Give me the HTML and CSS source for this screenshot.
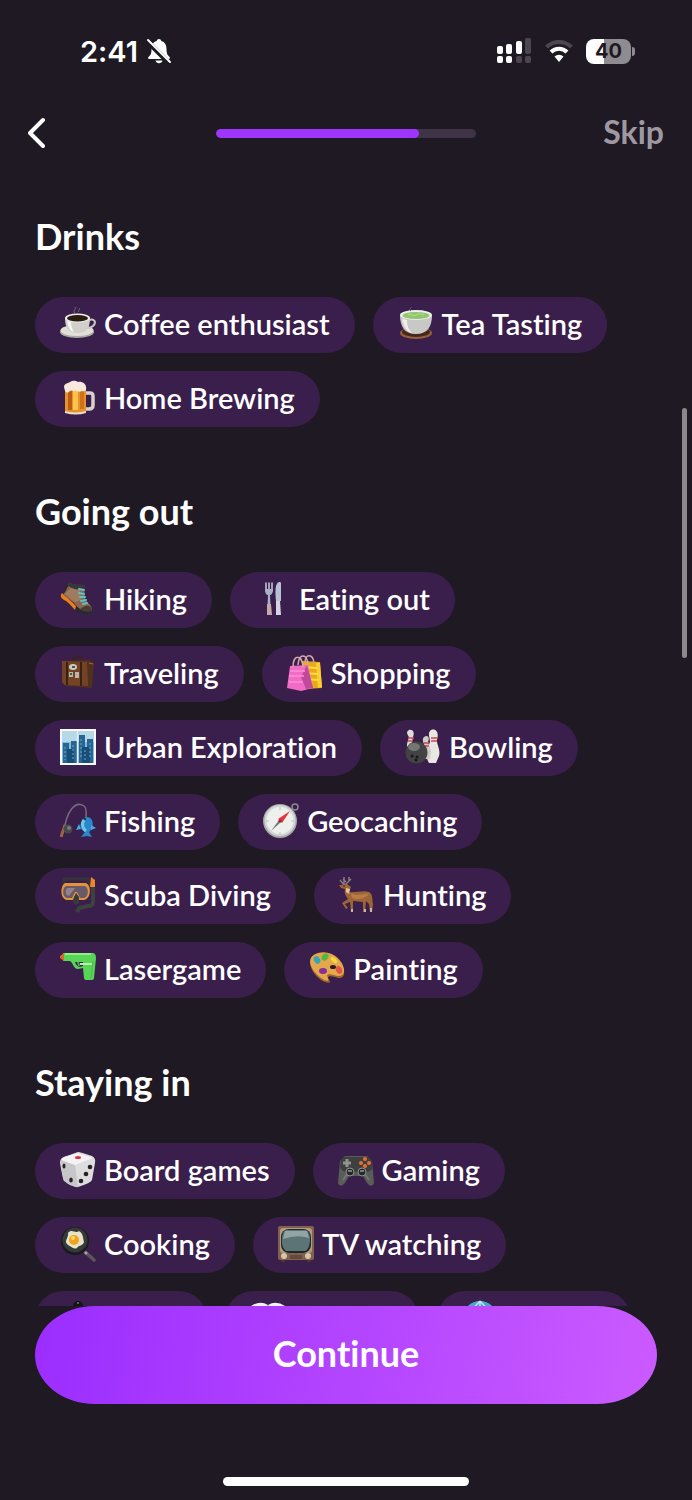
FILE: index.html
```html
<!DOCTYPE html>
<html lang="en">
<head>
    <meta charset="UTF-8">
    <meta name="viewport" content="width=device-width, initial-scale=1.0">
    <title>Interests</title>
    <link rel="stylesheet" href="styles.css">
</head>
<body>
    <div class="status-bar">
        <div class="status-left">
            <span class="time">2:41</span>
            <svg width="26" height="26" viewBox="0 0 26 26">
                <path d="M13 1c-1.400 0-2 .8-2.300 2C7 4 5.500 7 5.500 11c0 5-1 6-3 8-.9 1-.4 2 .8 2h19.400c1.200 0 1.700-1 .8-2-2-2-3-3-3-8 0-4-1.500-7-5.200-8C15 1.800 14.400 1 13 1z" fill="#fff"/>
                <path d="M9.500 22.500h7c-.5 1.800-1.800 2.800-3.500 2.800s-3-1-3.500-2.800z" fill="#fff"/>
                <path d="M1 3l22 22" stroke="#1e1922" stroke-width="5"/>
                <path d="M2 2l22 22" stroke="#fff" stroke-width="2" stroke-linecap="round"/>
            </svg>
        </div>
        <div class="status-right">
            <svg width="36" height="26" viewBox="0 0 36 26">
                <g fill="#fff">
                    <rect x="1" y="8" width="6" height="8" rx="2"/>
                    <rect x="10" y="6" width="6" height="10" rx="2"/>
                    <rect x="20" y="3" width="6" height="13" rx="2"/>
                    <rect x="1" y="18" width="6" height="7" rx="2"/>
                    <rect x="10" y="18" width="6" height="7" rx="2"/>
                </g>
                <g fill="#4b464f">
                    <rect x="29" y="0" width="6" height="16" rx="2"/>
                    <rect x="20" y="18" width="6" height="7" rx="2"/>
                    <rect x="29" y="18" width="6" height="7" rx="2"/>
                </g>
            </svg>
            <svg width="30" height="26" viewBox="0 0 30 26">
                <path d="M2.500 9a18 18 0 0 1 25 0" fill="none" stroke="#4b464f" stroke-width="4"/>
                <path d="M7 14a11.500 11.500 0 0 1 16 0" fill="none" stroke="#fff" stroke-width="4"/>
                <path d="M10.500 18.500a7 7 0 0 1 9 0L15 24z" fill="#fff"/>
            </svg>
            <div class="battery"><span>40</span></div>
        </div>
    </div>

    <header class="top-nav">
        <button class="back-btn" aria-label="Back">
            <svg width="17" height="32" viewBox="2 0 17 32">
                <path d="M17 3L4 16l13 13" fill="none" stroke="#fff" stroke-width="4" stroke-linecap="round" stroke-linejoin="round"/>
            </svg>
        </button>
        <div class="progress"><div class="progress-fill" style="width: 78%"></div></div>
        <a href="#skip" class="skip">Skip</a>
    </header>

    <main class="content">
        <section>
            <h2>Drinks</h2>
            <div class="chips">
                <button class="chip">
                    <svg class="icon" viewBox="0 0 36 36">
                        <ellipse cx="17" cy="26" rx="17" ry="6" fill="#aaa9a2"/>
                        <ellipse cx="17" cy="24.500" rx="16.500" ry="5.500" fill="#e0dfd8"/>
                        <path d="M29 14c5-2 8 2 4 6-2 2-5 2-6 2" fill="none" stroke="#c9c8c2" stroke-width="2"/>
                        <path d="M5 12c0 9 3 15 12.500 15S30 21 30 12z" fill="#d0cfc9"/>
                        <path d="M7 15c1 6 3 10 7 11-2-3-3-6-3-10z" fill="#f7f6f2"/>
                        <ellipse cx="17.500" cy="12" rx="12.500" ry="4.500" fill="#ecebe5"/>
                        <ellipse cx="17.500" cy="12.300" rx="10.500" ry="3.200" fill="#2a1c12"/>
                        <path d="M15 7c-3-3 2-3 0-6M19 6c-2-2 2-2 0-4" fill="none" stroke="#796889" stroke-width="1"/>
                    </svg>
                    Coffee enthusiast
                </button>
                <button class="chip">
                    <svg class="icon" viewBox="0 0 36 36">
                        <ellipse cx="18" cy="27" rx="16" ry="6" fill="#95613c"/>
                        <ellipse cx="18" cy="26" rx="14" ry="5" fill="#49281a"/>
                        <path d="M2 9c0 11 4 19 16 19s16-8 16-19z" fill="#c8c8c6"/>
                        <path d="M4 13c2 8 5 13 10 14-4-4-5-8-5-13z" fill="#efefed"/>
                        <ellipse cx="18" cy="9" rx="16" ry="5" fill="#eeefeb"/>
                        <ellipse cx="18" cy="9.500" rx="13.500" ry="3.500" fill="#8fc66f"/>
                        <path d="M10 9c3-2 5 2 8 0s5-1 8 0" fill="none" stroke="#b8df9a"/>
                        <path d="M13 5c-3-2 1-3 0-4" fill="none" stroke="#6d5778"/>
                    </svg>
                    Tea Tasting
                </button>
                <button class="chip">
                    <svg class="icon" viewBox="0 0 36 36">
                        <path d="M25 13h5q3 0 3 3v9q0 4-4 4h-4" fill="none" stroke="#d7d0cb" stroke-width="3.500"/>
                        <path d="M5 9h21v23q-10 3-21 0z" fill="#e8922b"/>
                        <path d="M8 11h4v19H8z" fill="#b95b16"/>
                        <path d="M13 11h5v19h-5z" fill="#ffc34b"/>
                        <path d="M20 11h4v18h-4z" fill="#cf721a"/>
                        <path d="M5 31q10 3 21 0v2q-10 3-21 0z" fill="#eee0d0"/>
                        <path d="M4 7c0-4 5-4 6-5 3-2 6-1 8 0 4-1 8 2 8 5 1 4-2 5-4 4-3 2-6-1-8 0-2 0-3-1-4 0s-3 3-5 0z" fill="#f8e8dd"/>
                    </svg>
                    Home Brewing
                </button>
            </div>
        </section>

        <section>
            <h2>Going out</h2>
            <div class="chips">
                <button class="chip">
                    <svg class="icon" viewBox="0 0 36 36">
                        <path d="M7 3L3 13c-4 4-1 6 4 9 5 4 9 12 24 11 2-1 2-3 1-5z" fill="#29282a"/>
                        <path d="M2 12c-3 4 0 6 4 8 4 3 6 6 9 9l1-4c-5-5-8-8-14-13z" fill="#ee7c20"/>
                        <path d="M9 2l15 4 1 11c1 4 7 7 7 12-9 3-14-2-18-7-3-3-7-5-11-8 2-3 5-7 6-12z" fill="#8a6750"/>
                        <path d="M12 6l8 2 1 11-6 2c-4-3-7-5-10-8z" fill="#a17b60"/>
                        <path d="M9 1c5 3 10 2 16 3l-1 5c-6 0-11-1-16-4z" fill="#38363a"/>
                        <path d="M25 25c4-1 7 1 7 5-5 2-9 0-12-2z" fill="#493b35"/>
                        <path d="M19 8l5 1M19 12l5 1M20 16l5 0M21 20l5-1M23 23l4-1" stroke="#5cc4c5" stroke-width="2" stroke-linecap="round"/>
                    </svg>
                    Hiking
                </button>
                <button class="chip">
                    <svg class="icon" viewBox="0 0 36 36">
                        <path d="M11 2v8M14 2v8M17 2v8" stroke="#c7cbdc" stroke-width="1.500" stroke-linecap="round"/>
                        <path d="M10 8h8c0 5-2 6-3 6l1 20h-4l1-20c-2 0-3-2-3-6z" fill="#aab0c6"/>
                        <path d="M12 23h4l1 11h-5z" fill="#c4aaa8"/>
                        <path d="M24 1c-4 1-4 10-3 19h5V2c0-1-1-1-2-1z" fill="#bac1d7"/>
                        <path d="M21 20h4l1 14h-5z" fill="#d4d4e2"/>
                    </svg>
                    Eating out
                </button>
                <button class="chip">
                    <svg class="icon" viewBox="0 0 36 36">
                        <path d="M13 5c0-5 9-5 9 0" fill="none" stroke="#39251d" stroke-width="2"/>
                        <path d="M2 6l27-1 5 3-2 25-27-2-3-3z" fill="#51301e"/>
                        <path d="M2 6l25 1 1 24-23-1-3-3z" fill="#744325"/>
                        <path d="M7 7v23M21 7v24" stroke="#392116" stroke-width="2"/>
                        <ellipse cx="13" cy="12" rx="4" ry="3" fill="#d2cbbc"/>
                        <path d="M9 17h4v5H9zM15 17h4v6h-4z" fill="#b9b7a6"/>
                        <path d="M12 12h3M10 19h2" stroke="#345e58" stroke-width="2"/>
                        <path d="M29 8l4 1" stroke="#a56d42"/>
                    </svg>
                    Traveling
                </button>
                <button class="chip">
                    <svg class="icon" viewBox="0 0 36 36">
                        <path d="M15 6l18 1 2 26-18 1z" fill="#e8ab17"/>
                        <path d="M29 8l4 0 2 24-4 1z" fill="#f9cf31"/>
                        <path d="M16 12l14 1M16 18l15 1M17 24l15 1" stroke="#ffd94e" stroke-width="2"/>
                        <path d="M3 11l18-1 5 23-12 3-14-3z" fill="#f36bc4"/>
                        <path d="M20 10l6 23-7 1-5-12z" fill="#c2489b"/>
                        <path d="M3 16h15M2 21h15M2 27h14" stroke="#fc93d6" stroke-width="1.500"/>
                        <path d="M6 12c0-13 9-13 10 0M11 10c1-12 9-12 10 0M18 7c0-8 8-9 9 1" fill="none" stroke="#d7a8af" stroke-width="1.500"/>
                    </svg>
                    Shopping
                </button>
                <button class="chip">
                    <svg class="icon" viewBox="0 0 36 36">
                        <path d="M0 0h36v36H0z" fill="#f7f8fb"/>
                        <path d="M2 2h32v32H2z" fill="#82bbdb"/>
                        <path d="M2 2h32v11H2z" fill="#b6d8e9"/>
                        <path d="M3 14h6v20H3zM11 12h6v22h-6zM19 6h6v28h-6zM27 10h6v24h-6z" fill="#286591"/>
                        <path d="M7 20h7v14H7zM22 18h8v16h-8z" fill="#164d79"/>
                        <path d="M5 18v13M13 16v15M21 10v20M25 21v10M30 14v16" stroke="#70a9c9" stroke-width="1" stroke-dasharray="2 2"/>
                        <path d="M17.500 2v32" stroke="#e3eff7" stroke-width="1.500"/>
                    </svg>
                    Urban Exploration
                </button>
                <button class="chip">
                    <svg class="icon" viewBox="0 0 36 36">
                        <path d="M4 1c4-1 6 3 4 7l-1 5 5 8-3 8H2V15l2-7C1 4 2 2 4 1z" fill="#dfdddc"/>
                        <path d="M26 1c6-2 8 4 6 9-1 5 4 10 2 17l-3 7h-7c-5-8-1-16 1-21 0-4-3-9 1-12z" fill="#e9e7e2"/>
                        <path d="M19 8c4-3 6 1 4 5l3 9-1 8h-6V15c-2-4-1-6 0-7z" fill="#cecbc8"/>
                        <path d="M3 9h6M3 12h5M26 9h7M26 12h6M19 14h5M19 17h5" stroke="#cf4650" stroke-width="1.500"/>
                        <circle cx="11.500" cy="23.500" r="11" fill="#424443"/>
                        <ellipse cx="9" cy="18" rx="6" ry="4" fill="#747674"/>
                        <circle cx="7" cy="27" r="1.500" fill="#171917"/>
                        <circle cx="12" cy="28" r="1.500" fill="#171917"/>
                        <circle cx="11" cy="31" r="1.500" fill="#171917"/>
                    </svg>
                    Bowling
                </button>
                <button class="chip">
                    <svg class="icon" viewBox="0 0 36 36">
                        <path d="M4 29C6 9 15-3 24 3c3 2 2 6 2 12" fill="none" stroke="#766c81" stroke-width="1.500"/>
                        <path d="M1 34l4-12" stroke="#9c6346" stroke-width="3"/>
                        <circle cx="8" cy="26" r="4.500" fill="#454a4c"/>
                        <circle cx="9" cy="25" r="2" fill="#777a76"/>
                        <path d="M26 14c9-1 8 12 3 15l3 5-5-1-6 1 4-5c-8-4-4-12 1-15z" fill="#2a87c8"/>
                        <path d="M19 21l-3 6 5-1M31 22l5 3-5 2" fill="#4ca8df"/>
                        <path d="M24 17c-3 4-1 9 2 11" fill="none" stroke="#70c5e9" stroke-width="3"/>
                        <circle cx="25" cy="16" r="1" fill="#172341"/>
                    </svg>
                    Fishing
                </button>
                <button class="chip">
                    <svg class="icon" viewBox="0 0 36 36">
                        <circle cx="32" cy="4" r="3" fill="none" stroke="#8b8990" stroke-width="1.500"/>
                        <circle cx="17" cy="18" r="17" fill="#a8aaa7"/>
                        <circle cx="17" cy="17.500" r="14.500" fill="#eef0ed" stroke="#d1d7d3" stroke-width="2"/>
                        <path d="M27 8L19 20l-4-4z" fill="#e8343b"/>
                        <path d="M8 28l8-11 2 2z" fill="#727a7b"/>
                        <path d="M17 4v3M17 29v3M3 18h3M28 18h3" stroke="#bbc1be"/>
                        <circle cx="17" cy="18" r="1.500" fill="#912c34"/>
                    </svg>
                    Geocaching
                </button>
                <button class="chip">
                    <svg class="icon" viewBox="0 0 36 36">
                        <path d="M4 7V2h24l2 7" fill="none" stroke="#34323a" stroke-width="3"/>
                        <path d="M33 4v21q0 4-5 4l-9 2-2 4" fill="none" stroke="#3b4240" stroke-width="4"/>
                        <path d="M31 0l4 3v7h-5z" fill="#ee8526"/>
                        <path d="M5 6h21c6 3 5 16-2 17h-5l-3-6-3 6H7C0 22 0 9 5 6z" fill="#e29538"/>
                        <path d="M6 9h19c4 2 4 11-1 12h-4l-3-6h-2l-3 6H7c-5-1-5-10-1-12z" fill="#6a5968"/>
                        <path d="M7 11h8l-6 8c-4-1-4-5-2-8z" fill="#93818c"/>
                        <path d="M14 20l2-4 3 4v6l-3 2-3-3z" fill="#373c3b"/>
                    </svg>
                    Scuba Diving
                </button>
                <button class="chip">
                    <svg class="icon" viewBox="0 0 36 36">
                        <path d="M5 8L1 3M5 8V0M6 8l4-4V0M7 5L4 2M9 5l3-3" fill="none" stroke="#887b7f" stroke-width="1.500"/>
                        <path d="M3 8l5-1 4 3-2 5c5 1 15-2 20 0 4 2 3 7 4 12l-1 8h-2l-1-8-3-3-1 11h-2V25l-10-1v11h-2l-1-10-5 2 3 4-2 1-4-6 6-4c-3-4-4-7-3-10l-4-1-2-3z" fill="#9d6536"/>
                        <path d="M12 16c7 4 12 0 18 1-4 5-12 6-17 4z" fill="#ba7a45"/>
                        <path d="M7 11l4 1-1 5-3-2z" fill="#ddc5a1"/>
                        <path d="M13 32v3M26 32v3M32 31v4" stroke="#c5b7ae" stroke-width="2"/>
                        <circle cx="5" cy="9" r=".8" fill="#261813"/>
                    </svg>
                    Hunting
                </button>
                <button class="chip">
                    <svg class="icon" viewBox="0 0 36 36">
                        <path d="M3 2h29c3 0 4 2 4 5l-2 20q0 2-2 2h-6q-2 0-2-2l-1-10-5 1c-5 0-5-8-9-8H3z" fill="#58d557"/>
                        <path d="M0 5l4-3v8l-4-3z" fill="#d86a28"/>
                        <path d="M5 3h26" stroke="#94ef82" stroke-width="2"/>
                        <path d="M15 11h8v4c-4 2-7 0-8-4z" fill="#3a1e4c"/>
                        <path d="M18 11l1 4" stroke="#48a852" stroke-width="2"/>
                        <path d="M20 13l12 0" stroke="#b7f0a3" stroke-width="2"/>
                        <path d="M33 10l-2 18" stroke="#41bd49" stroke-width="1"/>
                    </svg>
                    Lasergame
                </button>
                <button class="chip">
                    <svg class="icon" viewBox="0 0 36 36">
                        <path d="M9 3c13-4 25 7 26 17 1 7-4 8-9 6-6-2-9 0-6 3 4 4-4 3-8 0C2 22-5 7 9 3z" fill="#9b642d"/>
                        <path d="M9 2c13-4 25 7 26 16 1 7-5 8-10 6-7-2-8 0-6 3 2 4-3 3-7 0C2 20-5 6 9 2z" fill="#e5a74b"/>
                        <ellipse cx="8" cy="9" rx="3" ry="4" fill="#35a6b8" transform="rotate(-30 8 9)"/>
                        <ellipse cx="16" cy="6" rx="3" ry="4" fill="#54b744" transform="rotate(40 16 6)"/>
                        <ellipse cx="25" cy="9" rx="4" ry="2" fill="#f7d73a" transform="rotate(45 25 9)"/>
                        <ellipse cx="30" cy="19" rx="3" ry="4" fill="#df5847" transform="rotate(-25 30 19)"/>
                        <ellipse cx="14" cy="20" rx="4" ry="3" fill="#89319b"/>
                        <ellipse cx="24" cy="16" rx="3" ry="2" fill="#2c1c28"/>
                    </svg>
                    Painting
                </button>
            </div>
        </section>

        <section>
            <h2>Staying in</h2>
            <div class="chips">
                <button class="chip">
                    <svg class="icon" viewBox="0 0 36 36">
                        <path d="M18 0q2 0 14 4 4 2 3 7l-3 17q-1 3-14 7-3 1-14-6Q3 28 0 11 0 6 4 5z" fill="#dedddd"/>
                        <path d="M1 7l14 6 3 22Q8 34 4 28 1 20 1 7z" fill="#c7c6c8"/>
                        <path d="M4 5L18 1l15 5-18 7L1 8z" fill="#f4f2f2"/>
                        <ellipse cx="18" cy="5.500" rx="3" ry="1.500" fill="#df3042"/>
                        <g fill="#252229">
                            <ellipse cx="4" cy="14" rx="1.500" ry="2.500"/>
                            <ellipse cx="11" cy="28" rx="1.800" ry="2.500"/>
                            <circle cx="30" cy="15" r="2.300"/>
                            <circle cx="26" cy="22" r="2.300"/>
                            <circle cx="21" cy="29" r="2.300"/>
                        </g>
                    </svg>
                    Board games
                </button>
                <button class="chip">
                    <svg class="icon" viewBox="0 0 36 36">
                        <path d="M7 4l22 0 5 5 2 22c-3 6-7 1-11-7H11C7 32 3 37 0 31L2 9z" fill="#5a5c59"/>
                        <path d="M3 8q3-4 8-3h14q6-1 9 4v8q-3 4-9 3H11q-8 0-9-5z" fill="#3d403f"/>
                        <path d="M9 7v8M5 11h8" stroke="#93938f" stroke-width="3"/>
                        <g fill="#ee6e31">
                            <circle cx="27" cy="7" r="2"/>
                            <circle cx="27" cy="14" r="2"/>
                            <circle cx="23" cy="11" r="2"/>
                            <circle cx="31" cy="11" r="2"/>
                        </g>
                        <circle cx="12" cy="20" r="4" fill="#242929" stroke="#929590"/>
                        <circle cx="24" cy="20" r="4" fill="#242929" stroke="#929590"/>
                        <path d="M10 19h4M22 19h4" stroke="#d0d1ca"/>
                        <path d="M5 28l4-6M31 28l-4-6" stroke="#737773" stroke-width="2"/>
                    </svg>
                    Gaming
                </button>
                <button class="chip">
                    <svg class="icon" viewBox="0 0 36 36">
                        <path d="M23 24l11 10" stroke="#5c555b" stroke-width="3.500" stroke-linecap="round"/>
                        <circle cx="15" cy="15" r="14" fill="#181b1d"/>
                        <circle cx="15" cy="14" r="12.500" fill="#363a39"/>
                        <path d="M8 7c4-5 7 1 11-2 4 2 4 7 5 11-1 4-5 3-7 6-4 2-6-2-9-3-5-4 1-7 0-12z" fill="#e7e3cb"/>
                        <circle cx="14" cy="14" r="5" fill="#f2a51b"/>
                        <circle cx="13" cy="12" r="2" fill="#ffdb65"/>
                        <circle cx="26" cy="27" r="1.500" fill="#aaa4aa"/>
                    </svg>
                    Cooking
                </button>
                <button class="chip">
                    <svg class="icon" viewBox="0 0 36 36">
                        <rect x="0" y="0" width="36" height="34" rx="2" fill="#80604f"/>
                        <rect x="2" y="2" width="32" height="25" rx="3" fill="#b59a82"/>
                        <rect x="3" y="3" width="30" height="24" rx="8" fill="#1f292b"/>
                        <path d="M8 4h20q5 3 4 11-1 9-5 10H8q-5-4-4-12 0-7 4-9z" fill="#5c7475"/>
                        <path d="M7 5h22l2 7q-12-4-26 1z" fill="#91a5a4"/>
                        <circle cx="6" cy="30" r="3" fill="#d7c6ac"/>
                        <circle cx="30" cy="30" r="3" fill="#d7c6ac"/>
                        <path d="M12 30h12M12 32h12" stroke="#463528"/>
                        <path d="M3 34h4v2H3zM29 34h4v2h-4z" fill="#4e342b"/>
                    </svg>
                    TV watching
                </button>
                <button class="chip chip-narrow" aria-label="Chess">
                    <svg class="icon" viewBox="0 0 36 36">
                        <circle cx="18" cy="6" r="5" fill="#151417"/>
                        <circle cx="18" cy="3" r="1" fill="#77737b"/>
                        <path d="M13 11h10l-2 9 8 13H7l8-13z" fill="#222023"/>
                    </svg>
                </button>
                <button class="chip chip-wide" aria-label="Reading">
                    <svg class="icon" viewBox="0 0 36 36">
                        <path d="M1 6q9-6 17-1v27q-8-4-17 0zM18 5q8-5 17 1v26q-9-4-17 0z" fill="#f4f1f5"/>
                        <path d="M18 5v27" stroke="#8b8590"/>
                    </svg>
                </button>
                <button class="chip chip-wide" aria-label="Internet">
                    <svg class="icon" viewBox="0 0 36 36">
                        <circle cx="18" cy="18" r="17" fill="#4ba5cc"/>
                        <path d="M18 1v34M1 18h34M4 9q14 7 28 0M4 27q14-7 28 0M18 1q-17 16 0 34M18 1q17 16 0 34" fill="none" stroke="#c4e8ed" stroke-width="1.500"/>
                    </svg>
                </button>
            </div>
        </section>
    </main>
    <div class="scroll-thumb"></div>

    <footer class="bottom">
        <button class="continue-btn">Continue</button>
        <div class="home-indicator"></div>
    </footer>
</body>
</html>
```
FILE: styles.css
```css
* {
    box-sizing: border-box;
}

body {
    margin: 0;
    height: 100vh;
    display: flex;
    flex-direction: column;
    overflow: hidden;
    position: relative;
    background-color: #1e1922;
    color: #fff;
    font-family: Lato, "Open Sans", sans-serif;
    font-variant-ligatures: none;
}

svg {
    display: block;
    flex-shrink: 0;
}

button {
    border: none;
    font-family: inherit;
    font-variant-ligatures: inherit;
    color: inherit;
    cursor: pointer;
}

/* status bar */
.status-bar {
    display: flex;
    justify-content: space-between;
    align-items: center;
    height: 102px;
    padding: 0 61px 0 80px;
    flex-shrink: 0;
    font-family: Inter, sans-serif;
}

.status-left {
    display: flex;
    align-items: center;
    gap: 8px;
}

.time {
    font-size: 29px;
    font-weight: 600;
}

.status-right {
    display: flex;
    align-items: center;
    gap: 12px;
}

.battery {
    position: relative;
    width: 45px;
    height: 25px;
    border-radius: 8px;
    background: linear-gradient(to right, #fff 40%, #8e8b91 40%);
    color: #1e1922;
    font-size: 20px;
    font-weight: 700;
    line-height: 25px;
    text-align: center;
}

.battery::after {
    content: "";
    position: absolute;
    right: -4px;
    top: 8px;
    width: 3px;
    height: 9px;
    border-radius: 0 3px 3px 0;
    background-color: #8e8b91;
}

/* header */
.top-nav {
    display: grid;
    grid-template-columns: 1fr 260px 1fr;
    align-items: center;
    height: 62px;
    padding: 0 28px;
    flex-shrink: 0;
}

.back-btn {
    justify-self: start;
    padding: 0;
    background: none;
}

.progress {
    height: 9px;
    border-radius: 5px;
    background-color: #3f3348;
    overflow: hidden;
}

.progress-fill {
    height: 100%;
    border-radius: 5px;
    background-color: #9e35fc;
}

.skip {
    justify-self: end;
    color: #9e98a3;
    font-size: 32px;
    line-height: 36px;
    padding-bottom: 2px;
    font-weight: 700;
    text-decoration: none;
}

/* interests */
.content {
    flex: 1;
    min-height: 0;
    overflow: hidden;
    padding: 0 35px;
}

h2 {
    margin: 63px 0 40px;
    font-size: 36px;
    line-height: 42px;
    font-weight: 700;
}

section:first-child h2 {
    margin-top: 51px;
}

.chips {
    display: flex;
    flex-wrap: wrap;
    gap: 18px;
}

.chip {
    display: flex;
    align-items: center;
    gap: 8px;
    height: 56px;
    padding: 0 25px 2px;
    border-radius: 28px;
    background-color: #3a1e4c;
    font-size: 29px;
    font-weight: 600;
    line-height: 36px;
    white-space: nowrap;
}

.chip-narrow {
    width: 172px;
}

.chip-wide {
    width: 194px;
}

.icon {
    width: 36px;
    height: 36px;
}

.scroll-thumb {
    position: absolute;
    top: 408px;
    right: 5px;
    width: 5px;
    height: 250px;
    border-radius: 3px;
    background-color: #8b888d;
}

/* footer */
.bottom {
    flex-shrink: 0;
    padding: 0 35px 14px;
}

.continue-btn {
    display: block;
    width: 100%;
    height: 98px;
    padding: 0 0 4px;
    border-radius: 60px / 49px;
    background: linear-gradient(100deg, #9b2dff, #cb5bff);
    font-size: 36px;
    font-weight: 700;
}

.home-indicator {
    width: 246px;
    height: 9px;
    margin: 73px auto 0;
    border-radius: 5px;
    background-color: #fff;
}
```
